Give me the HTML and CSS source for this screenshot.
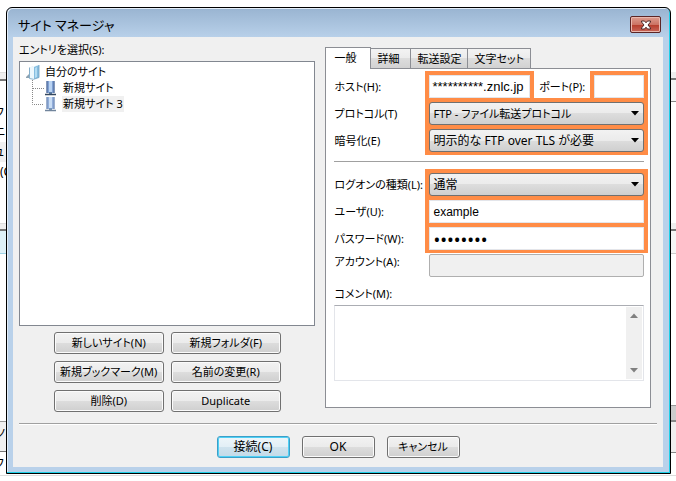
FILE: index.html
```html
<!DOCTYPE html>
<html lang="ja">
<head>
<meta charset="utf-8">
<title>サイト マネージャ</title>
<link rel="stylesheet" href="styles.css">
</head>
<body>
<div class="backdrop" aria-hidden="true">
  <div class="edge edge-left">
    <i class="bar bar-a"></i>
    <span class="peek peek-1">フ</span>
    <span class="peek peek-2">ニ</span>
    <i class="bar bar-b"></i>
    <span class="peek peek-3">ュ</span>
    <span class="peek peek-4">(C</span>
    <i class="bar bar-c"></i>
    <i class="bar bar-d"></i>
    <i class="bar bar-e"></i>
    <span class="peek peek-5">ノ</span>
    <span class="peek peek-6">フ</span>
  </div>
  <div class="edge edge-right">
    <i class="bar bar-f"></i>
    <i class="bar bar-g"></i>
    <i class="bar bar-h"></i>
    <i class="bar bar-i"></i>
  </div>
  <i class="bar bar-j"></i>
</div>

<main class="window">
  <header class="titlebar">
    <h1 class="title">サイト マネージャ</h1>
    <button class="close" type="button" aria-label="閉じる">
      <svg width="12" height="10" viewBox="0 0 12 10"><path d="M1.5 1h3L6 2.8 7.5 1h3v1L8 5l2.500 3v1h-3L6 7.200 4.500 9h-3V8L4 5 1.500 2z" fill="#fff" stroke="#4d2a2a" stroke-width="1"/></svg>
    </button>
  </header>

  <div class="client">
    <div class="columns">
      <section class="entries">
        <h2 class="entries-label">エントリを選択(S):</h2>
        <div class="tree">
          <div class="node root">
            <svg class="icon" width="14" height="16" viewBox="0 0 14 16"><path d="M3 4l4-2v13l-4-1z" fill="#dcebf3"/><path d="M0 13l3-3v4H0z" fill="#8fa3b2"/><path d="M4 3.500L11 1v12.500L7 15l-3-.5z" fill="#eef8fd"/><path d="M8 3l5-2v12.500L8 15z" fill="#86bde0"/><path d="M9 4l2-1v10l-2 1z" fill="#b4dcf2"/><path d="M3.500 3.500v11l4 .8 5.500-1.800V1" fill="none" stroke="#6f9fc0" stroke-width=".8"/></svg>
            <span>自分のサイト</span>
          </div>
          <div class="node child">
            <svg class="icon" width="24" height="16" viewBox="0 0 24 16"><path d="M.5 0v16M1 8.500h11" fill="none" stroke="#888" stroke-dasharray="1 1"/><path d="M14.500 1h8v12h-8z" fill="#7fa0d4"/><path d="M17 1h3v11h-3z" fill="#b9d3f2"/><path d="M15 1v12M22 1v12" stroke="#49618c"/><path d="M17 12h3v3h-3z" fill="#5b7da5"/><path d="M13 14.500h11" stroke="#33475e" stroke-width="1.500"/></svg>
            <span>新規サイト</span>
          </div>
          <div class="node child">
            <svg class="icon" width="24" height="16" viewBox="0 0 24 16"><path d="M.5 0v8.500H12" fill="none" stroke="#888" stroke-dasharray="1 1"/><path d="M14.500 1h8v12h-8z" fill="#92aedb"/><path d="M17 1h3v11h-3z" fill="#cadef5"/><path d="M15 1v12M22 1v12" stroke="#7089b0"/><path d="M17 12h3v3h-3z" fill="#7b98ba"/><path d="M13 14.500h11" stroke="#71859c" stroke-width="1.500"/></svg>
            <span class="selected">新規サイト 3</span>
          </div>
        </div>
        <div class="actions">
          <button class="btn compact" type="button">新しいサイト(N)</button>
          <button class="btn compact" type="button">新規フォルダ(F)</button>
          <button class="btn compact" type="button">新規ブックマーク(M)</button>
          <button class="btn compact" type="button">名前の変更(R)</button>
          <button class="btn compact" type="button">削除(D)</button>
          <button class="btn compact" type="button">Duplicate</button>
        </div>
      </section>

      <section class="settings">
        <div class="tabs" role="tablist">
          <button class="tab active" type="button" role="tab" aria-selected="true">一般</button>
          <button class="tab tab-short" type="button" role="tab">詳細</button>
          <button class="tab" type="button" role="tab">転送設定</button>
          <button class="tab" type="button" role="tab">文字セット</button>
        </div>
        <form class="panel">
          <div class="row">
            <label for="host">ホスト(H):</label>
            <div class="pair">
              <div class="mark mark-host"><input id="host" class="field arial host" type="text" value="**********.znlc.jp"></div>
              <label for="port">ポート(P):</label>
              <div class="mark mark-port"><input id="port" class="field" type="text"></div>
            </div>
          </div>
          <div class="row">
            <label for="protocol">プロトコル(T)</label>
            <div class="mark combo"><select id="protocol" class="compact"><option>FTP - ファイル転送プロトコル</option></select><svg class="arrow" width="8" height="5" viewBox="0 0 8 5"><path d="M0 0h8L4 4.500z"/></svg></div>
          </div>
          <div class="row">
            <label for="encryption">暗号化(E)</label>
            <div class="mark mark-last combo"><select id="encryption"><option>明示的な FTP over TLS が必要</option></select><svg class="arrow" width="8" height="5" viewBox="0 0 8 5"><path d="M0 0h8L4 4.500z"/></svg></div>
          </div>
          <hr class="rule">
          <div class="row">
            <label for="logon">ログオンの種類(L):</label>
            <div class="mark combo"><select id="logon"><option>通常</option></select><svg class="arrow" width="8" height="5" viewBox="0 0 8 5"><path d="M0 0h8L4 4.500z"/></svg></div>
          </div>
          <div class="row">
            <label for="user">ユーザ(U):</label>
            <div class="mark"><input id="user" class="field arial" type="text" value="example"></div>
          </div>
          <div class="row">
            <label for="password">パスワード(W):</label>
            <div class="mark mark-last"><input id="password" class="field password" type="password" value="password"></div>
          </div>
          <div class="row row-plain">
            <label for="account">アカウント(A):</label>
            <div class="plain"><input id="account" class="field" type="text" disabled></div>
          </div>
          <label class="comment-label" for="comment">コメント(M):</label>
          <div class="comment-box">
            <textarea id="comment"></textarea>
            <div class="scroll" aria-hidden="true">
              <svg width="8" height="5" viewBox="0 0 8 5"><path d="M0 5h8L4 .5z"/></svg>
              <svg width="8" height="5" viewBox="0 0 8 5"><path d="M0 0h8L4 4.500z"/></svg>
            </div>
          </div>
        </form>
      </section>
    </div>

    <footer class="footer">
      <button class="btn primary" type="button">接続(C)</button>
      <button class="btn" type="button">OK</button>
      <button class="btn compact" type="button">キャンセル</button>
    </footer>
  </div>
</main>
</body>
</html>
```

FILE: styles.css
```css
* { box-sizing: border-box; }

body {
  margin: 0;
  min-height: 100vh;
  padding: 7px 5px 7px 6px;
  background: #fff;
  color: #000;
  font: 12px/16px "Noto Sans", "Noto Sans CJK JP", sans-serif;
  font-feature-settings: "palt";
}

button, input, select, textarea {
  font: inherit;
  font-feature-settings: inherit;
  color: inherit;
  margin: 0;
}

/* Parts of the main window seen past the dialog's edges */
.backdrop { position: absolute; inset: 0; overflow: hidden; }
.edge { position: absolute; top: 0; bottom: 0; overflow: hidden; }
.edge-left { left: 0; width: 6px; }
.edge-right { right: 0; width: 5px; }
.bar { position: absolute; left: 0; right: 0; }
.peek { position: absolute; left: -6px; white-space: nowrap; }
.peek-1 { top: 105px; }
.peek-2 { top: 124px; }
.peek-3 { top: 144px; }
.peek-4 { top: 164px; left: 0; }
.peek-5 { top: 426px; left: -4px; }
.peek-6 { top: 456px; }
.bar-a { top: 72px; height: 9px; background: #eee; border-top: 1px solid #ddd; border-bottom: 2px solid #777; }
.bar-b { top: 142px; height: 20px; background: #f0f0f0; }
.bar-c { top: 223px; height: 8px; background: #eee; border-top: 1px solid #ddd; border-bottom: 2px solid #777; }
.bar-d { top: 231px; height: 23px; background: #dff1f8; border-bottom: 1px solid #9ed3e6; }
.bar-e { top: 421px; height: 31px; background: #f0f0f0; border-top: 1px solid #999; border-bottom: 1px solid #777; }
.bar-f { top: 72px; height: 30px; background: linear-gradient(#eee 6px, #777 6px, #777 8px, #f5f5f5 8px); border-bottom: 1px solid #888; }
.bar-g { top: 223px; height: 31px; background: linear-gradient(#eee 6px, #777 6px, #777 8px, #f5f5f5 8px); border-bottom: 1px solid #ccc; }
.bar-h { top: 405px; height: 17px; background: #ccc; border-top: 1px solid #999; border-bottom: 2px solid #888; }
.bar-i { top: 422px; height: 31px; background: #f0eeee; border-bottom: 1px solid #888; }
.bar-j { top: 475px; height: 1px; background: #ddd; }

.window {
  position: relative;
  display: flex;
  flex-direction: column;
  min-height: calc(100vh - 14px);
  padding: 0 7px 6px 6px;
  border: 1px solid #000;
  border-radius: 6px 6px 0 0;
  background: linear-gradient(#99b4d1, #b9d1ea 30px);
  box-shadow: inset -1px -1px #1fd0e8, inset 1px 1px #e4eef8;
}

.titlebar {
  display: flex;
  align-items: center;
  justify-content: space-between;
  height: 29px;
  padding: 4px 2px 0 5px;
}
.title { margin: 0; font-size: 13px; font-weight: 400; }
.close {
  display: grid;
  place-items: center;
  width: 31px;
  height: 17px;
  padding: 0;
  border: 1px solid #5c2525;
  border-radius: 2px;
  background: linear-gradient(#dd9c8f, #cc7464 50%, #b43a28 50%, #c9675a);
  box-shadow: inset 0 0 0 1px #e9b8ae;
}

.client {
  flex: 1;
  display: flex;
  flex-direction: column;
  padding: 5px 6px 9px 6px;
  background: #f0f0f0;
}
.columns { flex: 1; display: flex; gap: 10px; }

.entries { flex: 296; display: flex; flex-direction: column; }
.entries-label { margin: 0 0 3px; font-size: 11px; font-weight: 400; }
.tree { flex: 1; padding: 2px 6px; border: 1px solid #828790; background: #fff; font-size: 11px; }
.node { display: flex; align-items: center; height: 16px; }
.root { gap: 4px; }
.child { gap: 6px; padding-left: 6px; }
.icon { overflow: visible; }
.node span { padding: 0 1px; }
.selected { background: #f0f0f0; }

.actions {
  display: grid;
  grid-template-columns: 110px 110px;
  gap: 7px;
  justify-content: center;
  padding: 6px 0 11px;
}
.btn {
  height: 22px;
  padding: 0 2px;
  border: 1px solid #707070;
  border-radius: 3px;
  background: linear-gradient(#f2f2f2, #ebebeb 50%, #dddddd 50%, #cfcfcf);
  box-shadow: inset 0 0 0 1px #fbfbfb;
  line-height: 18px;
  white-space: nowrap;
}
.compact { font-size: 11px; }

.settings { flex: 325; display: flex; flex-direction: column; padding: 5px 6px 15px 0; }
.tabs { display: flex; align-items: flex-end; }
.tab {
  height: 20px;
  padding: 0 6px;
  border: 1px solid #8c8e94;
  border-bottom: 0;
  border-left-width: 0;
  background: linear-gradient(#f3f3f3, #ebebeb 50%, #dddddd 50%, #d2d2d2);
  font-size: 11px;
  white-space: nowrap;
}
.tab-short { padding-right: 11px; }
.tab.active {
  z-index: 1;
  height: 22px;
  margin-bottom: -1px;
  padding: 0 14px 2px 8px;
  border-left-width: 1px;
  background: #fff;
}
.panel {
  flex: 1;
  display: flex;
  flex-direction: column;
  padding: 2px 2px 26px 8px;
  border: 1px solid #8c8e94;
  background: #fff;
}
.row { display: grid; grid-template-columns: 91px 1fr; align-items: start; }
.row label { padding-top: 8px; font-size: 11px; white-space: nowrap; }
.row-plain label { padding-top: 1px; }
.pair { display: flex; justify-content: space-between; }
.mark { padding: 4px 4px 0; background: #ff8c46; }
.mark-last { padding-bottom: 3px; }
.mark-host { width: 109px; }
.mark-port { width: 58px; }
.plain { padding: 1px 4px 0; }
.field {
  display: block;
  width: 100%;
  height: 23px;
  padding: 0 3px;
  border: 1px solid #e3e5ea;
  background: #fff;
}
.field:disabled { border-color: #afafaf; border-radius: 2px; background: #f0f0f0; }
.arial { font-family: "Liberation Sans", sans-serif; }
.host { padding: 0 2px; font-size: 13px; }
.password { font-size: 18px; }
.combo { position: relative; }
.combo select {
  display: block;
  appearance: none;
  width: 100%;
  height: 23px;
  padding: 0 20px 0 3px;
  border: 1px solid #707070;
  border-radius: 3px;
  background: linear-gradient(#f2f2f2, #ebebeb 50%, #dddddd 50%, #cfcfcf);
}
.arrow { position: absolute; top: 13px; right: 9px; pointer-events: none; }
.rule { width: calc(100% - 4px); margin: 6px 0 7px; border: 0; border-top: 1px solid #a0a0a0; }
.comment-label { margin-top: 9px; font-size: 11px; }
.comment-box {
  flex: 1;
  display: flex;
  margin: 3px 4px 0 0;
  padding: 1px;
  border: 1px solid #e3e5ea;
  border-top-color: #abadb3;
}
.comment-box textarea { flex: 1; min-width: 0; border: 0; padding: 2px; resize: none; overflow: hidden; background: #fff; }
.scroll {
  display: flex;
  flex-direction: column;
  align-items: center;
  justify-content: space-between;
  width: 16px;
  padding: 6px 0;
  background: #f0f0f0;
  fill: #808080;
}

.footer {
  display: flex;
  justify-content: center;
  gap: 12px;
  padding-top: 12px;
  border-top: 1px solid #a0a0a0;
  box-shadow: inset 0 1px #fff;
}
.footer .btn { width: 73px; }
.primary {
  border-color: #3c9fc8;
  background: linear-gradient(#eef6fa, #e2eff6 50%, #cfe3ee 50%, #c3dae8);
  box-shadow: inset 0 0 0 1px #4fd0f5;
}
```
